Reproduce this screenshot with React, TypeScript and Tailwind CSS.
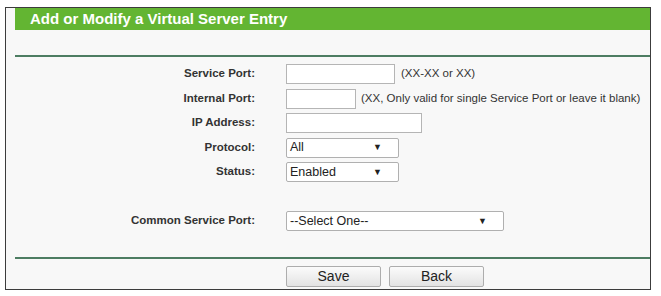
const labelCls =
  "w-[249px] shrink-0 text-right text-[11.5px] font-bold text-[#333]";
const hintCls = "text-[11.5px] text-[#333] whitespace-nowrap";

function Row({ label, children }: { label: string; children: React.ReactNode }) {
  return (
    <div className="flex h-[20px] items-center">
      <div className={labelCls}>{label}</div>
      <div className="ml-[31px] flex items-center">{children}</div>
    </div>
  );
}

function TextBox({ width }: { width: string }) {
  return <div className={`h-[20px] ${width} border border-[#b5b5b5] bg-white`} />;
}

function Select({ value, width }: { value: string; width: string }) {
  return (
    <div
      className={`flex h-[20px] ${width} items-center justify-between rounded-[2px] border border-[#b0b0b0] bg-white pl-[3px] pr-[16px] text-[12.5px] text-[#222]`}
    >
      <span>{value}</span>
      <span className="text-[9px] leading-none">▼</span>
    </div>
  );
}

function Button({ label }: { label: string }) {
  return (
    <div className="flex h-[21px] w-[95px] items-center justify-center rounded-[2px] border border-[#adadad] bg-gradient-to-b from-[#fbfbfb] to-[#e3e3e3] text-[14px] text-[#222]">
      {label}
    </div>
  );
}

export default function App() {
  return (
    <div className="h-[296px] w-[661px] bg-white font-['Liberation_Sans',Arial,sans-serif]">
      <div className="ml-[5px] pt-[7px]">
        <div className="flex h-[283px] w-[646px] flex-col border border-[#3c3c3c] bg-[#f8f8f8]">
          <div className="ml-[9px] flex h-[22px] items-center bg-[#63b532] pl-[15px] text-[15px] font-bold text-white">
            Add or Modify a Virtual Server Entry
          </div>

          <div className="ml-[9px] mt-[25px] h-[2px] bg-[#4d7d62]" />

          <div className="mt-[7px] flex flex-col gap-[4.5px]">
            <Row label="Service Port:">
              <TextBox width="w-[109px]" />
              <span className={`ml-[6px] ${hintCls}`}>(XX-XX or XX)</span>
            </Row>
            <Row label="Internal Port:">
              <TextBox width="w-[70px]" />
              <span className={`ml-[5px] ${hintCls}`}>
                (XX, Only valid for single Service Port or leave it blank)
              </span>
            </Row>
            <Row label="IP Address:">
              <TextBox width="w-[136px]" />
            </Row>
            <Row label="Protocol:">
              <Select value="All" width="w-[113px]" />
            </Row>
            <Row label="Status:">
              <Select value="Enabled" width="w-[113px]" />
            </Row>
          </div>

          <div className="mt-[29px]">
            <Row label="Common Service Port:">
              <Select value="--Select One--" width="w-[218px]" />
            </Row>
          </div>

          <div className="ml-[9px] mt-[26px] h-[2px] bg-[#4d7d62]" />

          <div className="ml-[280px] mt-[7px] flex gap-[8px]">
            <Button label="Save" />
            <Button label="Back" />
          </div>
        </div>
      </div>
    </div>
  );
}
